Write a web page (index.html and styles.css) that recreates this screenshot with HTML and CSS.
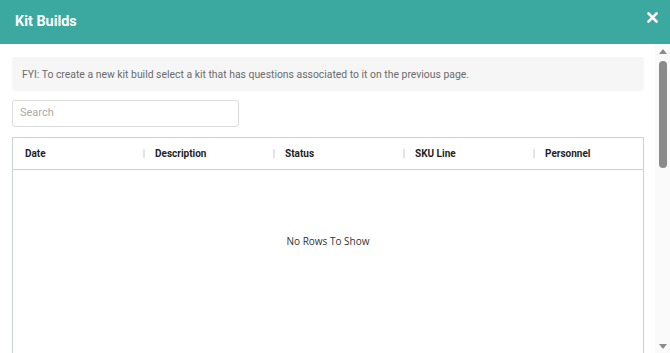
FILE: index.html
```html
<!DOCTYPE html>
<html>
<head>
  <meta charset="utf-8">
  <title>Kit Builds</title>
  <link rel="stylesheet" href="styles.css">
</head>
<body>
  <div class="modal">
    <!-- Cabecera del modal -->
    <div class="modal-header">
      <h2 class="modal-title">Kit Builds</h2>
      <button class="modal-close" aria-label="Close">
        <svg width="11" height="11" viewBox="0 0 11 11">
          <path d="M1.5 1.5 L9.5 9.5 M9.5 1.5 L1.5 9.5" stroke="#fff" stroke-width="2.6" stroke-linecap="square"/>
        </svg>
      </button>
    </div>

    <div class="modal-main">
      <!-- Cuerpo -->
      <div class="modal-body">
        <div class="fyi">FYI: To create a new kit build select a kit that has questions associated to it on the previous page.</div>

        <input class="search" type="text" placeholder="Search">

        <div class="grid">
          <div class="grid-header">
            <div class="grid-cell">Date</div>
            <div class="grid-cell">Description</div>
            <div class="grid-cell">Status</div>
            <div class="grid-cell">SKU Line</div>
            <div class="grid-cell">Personnel</div>
          </div>
          <div class="grid-body">
            <span class="no-rows">No Rows To Show</span>
          </div>
        </div>
      </div>

      <!-- Barra de scroll -->
      <div class="scrollbar">
        <div class="scroll-arrow up"></div>
        <div class="scroll-track">
          <div class="scroll-thumb"></div>
        </div>
        <div class="scroll-arrow down"></div>
      </div>
    </div>
  </div>
</body>
</html>
```

FILE: styles.css
```css
* {
  margin: 0;
  padding: 0;
  box-sizing: border-box;
}

html, body {
  height: 100%;
  overflow: hidden;
}

body {
  font-family: Roboto, "Liberation Sans", sans-serif;
  background: #fff;
}

.modal {
  display: flex;
  flex-direction: column;
  height: 100%;
}

/* Cabecera */
.modal-header {
  height: 44px;
  flex: none;
  background: #3ca9a0;
  display: flex;
  align-items: center;
  justify-content: space-between;
  padding: 0 12px 0 15px;
}

.modal-title {
  font-size: 14.4px;
  font-weight: 700;
  color: #fff;
  margin-top: -2px;
}

.modal-close {
  background: none;
  border: 0;
  width: 11px;
  height: 11px;
  display: flex;
  margin-top: -10px;
}

.modal-main {
  flex: 1;
  min-height: 0;
  display: flex;
}

/* Cuerpo */
.modal-body {
  flex: 1;
  overflow: hidden;
  padding: 13px 11px 12px 12px;
  display: flex;
  flex-direction: column;
}

.fyi {
  flex: none;
  background: #f6f6f6;
  border-radius: 3px;
  height: 34px;
  padding: 0 10px;
  display: flex;
  align-items: center;
  font-size: 10.4px;
  color: #6b6b6b;
}

.search {
  flex: none;
  width: 227px;
  height: 27px;
  margin-top: 9px;
  border: 1px solid #dcdcdc;
  border-radius: 3px;
  padding: 0 7px 2px;
  font-family: Roboto, "Liberation Sans", sans-serif;
  font-size: 11px;
  color: #333;
  outline: none;
}

.search::placeholder {
  color: #aaa;
}

/* Tabla */
.grid {
  flex: none;
  margin-top: 10px;
  border: 1px solid #cdd0d4;
  border-bottom: 0;
  height: 640px;
  display: flex;
  flex-direction: column;
}

.grid-header {
  height: 32px;
  flex: none;
  display: grid;
  grid-template-columns: repeat(5, 130px);
  border-bottom: 1px solid #cdd0d4;
}

.grid-cell {
  position: relative;
  display: flex;
  align-items: center;
  padding-left: 12px;
  font-size: 10px;
  font-weight: 700;
  color: #1f1f1f;
}

.grid-cell + .grid-cell::before {
  content: "";
  position: absolute;
  left: 0;
  top: 11px;
  width: 2px;
  height: 9px;
  background: #e2e4e7;
}

.grid-body {
  flex: none;
  padding-top: 64px;
  display: flex;
  justify-content: center;
}

.no-rows {
  font-family: "Open Sans", "DejaVu Sans", sans-serif;
  font-size: 10px;
  color: #333;
}

/* Barra de scroll */
.scrollbar {
  width: 15px;
  flex: none;
  background: #fafafa;
  display: flex;
  flex-direction: column;
  align-items: center;
}

.scroll-arrow {
  width: 0;
  height: 0;
  border-left: 4px solid transparent;
  border-right: 4px solid transparent;
}

.scroll-arrow.up {
  margin-top: 5px;
  border-bottom: 5px solid #8c8c8c;
}

.scroll-arrow.down {
  margin-bottom: 4px;
  border-top: 5px solid #8c8c8c;
}

.scroll-track {
  flex: 1;
  width: 100%;
  display: flex;
  justify-content: center;
  padding-top: 7px;
}

.scroll-thumb {
  width: 8px;
  height: 107px;
  border-radius: 4px;
  background: #8a8a8a;
}
```
